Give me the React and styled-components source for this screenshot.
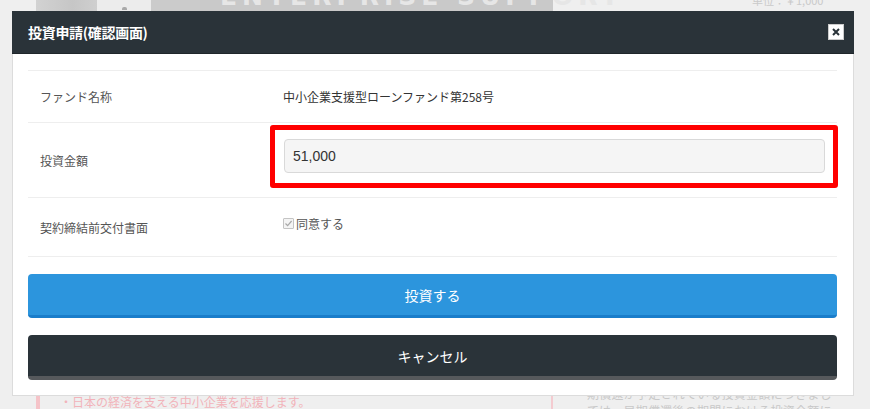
import React from 'react';
import styled, { createGlobalStyle } from 'styled-components';

const GlobalStyle = createGlobalStyle`
  html, body {
    margin: 0;
    padding: 0;
    background: #efefef;
  }
  body {
    font-family: "Noto Sans CJK JP", "Liberation Sans", sans-serif;
  }
  * {
    box-sizing: border-box;
  }
`;

const Page = styled.div`
  position: relative;
  width: 870px;
  height: 409px;
  overflow: hidden;
  display: flex;
  flex-direction: column;
  justify-content: space-between;
  background: #efefef;
`;

const Banner = styled.div`
  height: 11px;
  display: flex;
  align-items: flex-end;
  padding-left: 36px;
  overflow: hidden;
`;

const BannerBlock = styled.div`
  width: ${props => props.width}px;
  height: 40px;
  flex-shrink: 0;
  background: ${props => props.bg};
  display: flex;
  align-items: flex-end;
  justify-content: ${props => (props.center ? 'center' : 'flex-start')};
`;

const BannerDot = styled.span`
  width: 5px;
  height: 3px;
  margin-bottom: 1px;
  border-radius: 2px 2px 0 0;
  background: #a9a9a9;
`;

const BannerTitle = styled.span`
  padding-left: 20px;
  margin-bottom: 3px;
  font-family: "DejaVu Sans", sans-serif;
  font-weight: bold;
  font-size: 25px;
  line-height: 22px;
  letter-spacing: 5px;
  color: #e6e6e6;
  white-space: nowrap;
`;

const Unit = styled.span`
  width: 65px;
  margin-left: auto;
  margin-right: 53px;
  margin-bottom: 4px;
  font-size: 11px;
  line-height: 14px;
  color: #cacaca;
  text-align: right;
  white-space: nowrap;
`;

const Footer = styled.div`
  height: 30px;
  display: grid;
  grid-template-columns: 36px 515px 1fr;
  overflow: hidden;
`;

const Lead = styled.div`
  grid-column: 2;
  border-left: 4px solid #f5c3c8;
  padding: 15px 0 0 20px;
  font-size: 12px;
  line-height: 16px;
  color: #f2b3ba;
  white-space: nowrap;
`;

const Side = styled.div`
  border-left: 2px solid #f4cbd0;
  padding: 6px 0 0 34px;
  font-size: 12px;
  line-height: 17px;
  letter-spacing: 0.25px;
  color: #c9c9c9;
  white-space: nowrap;
`;

const Modal = styled.div`
  position: absolute;
  top: 11px;
  left: 12px;
  width: 842px;
  height: 385px;
  border: 1px solid #dcdcdc;
  border-top: none;
  background: #fff;
  display: flex;
  flex-direction: column;
`;

const ModalHeader = styled.div`
  height: 43px;
  flex-shrink: 0;
  margin: 0 -1px;
  padding: 0 10px 0 16px;
  background: #2a3339;
  border-bottom: 1px solid #1f262b;
  display: flex;
  align-items: center;
  justify-content: space-between;
`;

const Title = styled.h1`
  margin: 0;
  font-size: 14px;
  font-weight: bold;
  color: #fff;
  letter-spacing: -0.3px;
`;

const CloseButton = styled.button`
  width: 16px;
  height: 16px;
  padding: 0;
  border: 1px solid #ccc;
  background: #fff;
  display: flex;
  align-items: center;
  justify-content: center;
  cursor: pointer;
`;

const ModalBody = styled.div`
  padding: 16px 16px 16px 15px;
  display: flex;
  flex-direction: column;
`;

const Table = styled.div`
  border-top: 1px solid #eeeeee;
`;

const Row = styled.div`
  display: grid;
  grid-template-columns: 255px 1fr;
  height: ${props => props.height}px;
  border-bottom: 1px solid #eeeeee;
`;

const Label = styled.div`
  padding-left: 12px;
  display: flex;
  align-items: center;
  font-size: 12px;
  color: #555;
`;

const Value = styled.div`
  display: flex;
  align-items: ${props => (props.top ? 'flex-start' : 'center')};
  padding-top: ${props => (props.top ? '17px' : '0')};
  font-size: 12px;
  color: #333;
`;

const Highlight = styled.div`
  margin: 2px -1px 0 -13px;
  flex: 1;
  align-self: flex-start;
  border: 5px solid #ff0000;
  border-radius: 3px;
  padding: 9px 8px 10px 9px;
`;

const AmountInput = styled.input`
  display: block;
  width: 100%;
  height: 34px;
  padding: 0 8px;
  border: 1px solid #d9d9d9;
  border-radius: 4px;
  background: #f5f5f5;
  font-family: "Liberation Sans", sans-serif;
  font-size: 14px;
  color: #333;
  outline: none;
`;

const CheckLabel = styled.label`
  display: flex;
  align-items: center;
  gap: 2px;
  font-size: 12px;
  color: #555;
`;

const CheckBox = styled.span`
  width: 11px;
  height: 11px;
  border: 1px solid #c4c4c4;
  border-radius: 1px;
  background: #f4f4f4;
  display: flex;
  align-items: center;
  justify-content: center;
`;

const Button = styled.button`
  display: block;
  width: 100%;
  height: ${props => props.height}px;
  margin-top: 17px;
  border: none;
  border-bottom: ${props => props.shadowWidth}px solid ${props => props.shadow};
  border-radius: 4px;
  background: ${props => props.bg};
  font-family: inherit;
  font-size: 14px;
  font-weight: 400;
  color: #fff;
  cursor: pointer;
`;

export default function App() {
  return (
    <>
      <GlobalStyle />
      <Page>
        <Banner>
          <BannerBlock width={61} bg="linear-gradient(90deg, #d2d2d2, #c6c6c6 60%, #cfcfcf)" />
          <BannerBlock width={54} bg="#ececec" center>
            <BannerDot />
          </BannerBlock>
          <BannerBlock width={49} bg="#cbcbcb" />
          <BannerBlock width={353} bg="#c9c9c9">
            <BannerTitle>ENTERPRISE SUPPORT</BannerTitle>
          </BannerBlock>
          <Unit>単位：￥1,000</Unit>
        </Banner>

        <Footer>
          <Lead>・日本の経済を支える中小企業を応援します。</Lead>
          <Side>
            期償還が予定されている投資金額につきまし
            <br />
            ては、早期償還後の期間における投資金額に
          </Side>
        </Footer>

        <Modal>
          <ModalHeader>
            <Title>投資申請(確認画面)</Title>
            <CloseButton aria-label="閉じる">
              <svg width="8" height="8" viewBox="0 0 8 8">
                <path d="M1 1 L7 7 M7 1 L1 7" stroke="#2a3339" strokeWidth="2" />
              </svg>
            </CloseButton>
          </ModalHeader>

          <ModalBody>
            <Table>
              <Row height={52}>
                <Label>ファンド名称</Label>
                <Value>中小企業支援型ローンファンド第258号</Value>
              </Row>
              <Row height={75}>
                <Label>投資金額</Label>
                <Value>
                  <Highlight>
                    <AmountInput defaultValue="51,000" readOnly />
                  </Highlight>
                </Value>
              </Row>
              <Row height={59}>
                <Label>契約締結前交付書面</Label>
                <Value top>
                  <CheckLabel>
                    <CheckBox>
                      <svg width="9" height="9" viewBox="0 0 9 9">
                        <path d="M1.5 4.5 L3.6 6.6 L7.6 2" fill="none" stroke="#a8a8a8" strokeWidth="1.2" />
                      </svg>
                    </CheckBox>
                    同意する
                  </CheckLabel>
                </Value>
              </Row>
            </Table>

            <Button height={44} bg="#2c95dd" shadow="#1a7dca" shadowWidth={3}>
              投資する
            </Button>
            <Button height={45} bg="#2a3339" shadow="#56595c" shadowWidth={4}>
              キャンセル
            </Button>
          </ModalBody>
        </Modal>
      </Page>
    </>
  );
}
